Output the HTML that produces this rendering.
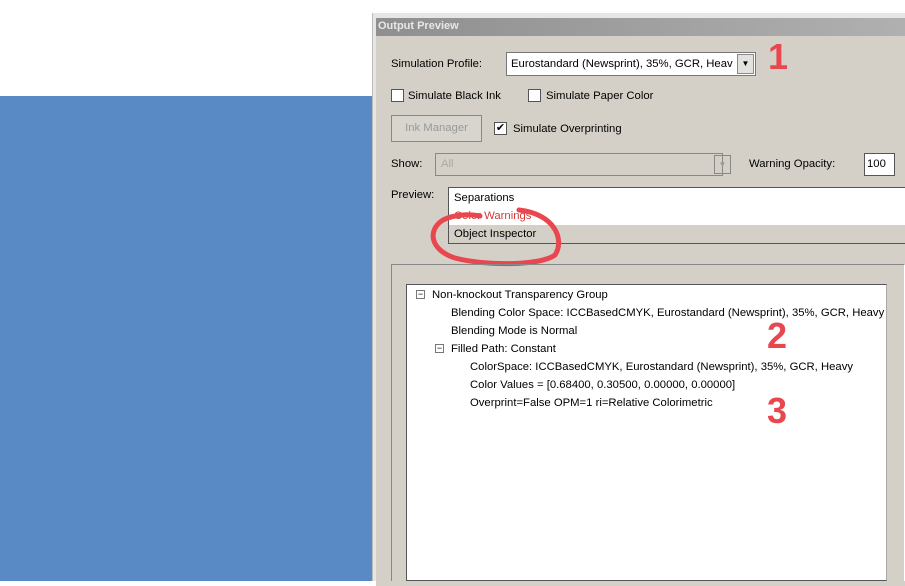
<!DOCTYPE html>
<html><head><style>
*{margin:0;padding:0;box-sizing:border-box}
body{width:905px;height:581px;position:relative;overflow:hidden;background:#fff;font-family:"Liberation Sans",sans-serif;font-size:11.3px;color:#000}
.a{position:absolute;white-space:nowrap}
.cb{position:absolute;width:13px;height:13px;background:#fff;border:1px solid #555}
.red{color:#e8474f;font-weight:bold;font-size:36px;font-family:"Liberation Sans",sans-serif}
</style></head><body>
<div class="a" style="left:0;top:96px;width:372px;height:485px;background:#5a8ac6"></div>
<div class="a" style="left:372px;top:13px;width:533px;height:568px;background:#e8e6e2;border-left:1px solid #bbb"></div>
<div class="a" style="left:376px;top:18px;width:529px;height:568px;background:#d4d0c8"></div>
<div class="a" style="left:376px;top:18px;width:529px;height:18px;background:linear-gradient(90deg,#8f8f8f,#b0b0b0);color:#e8e8e8;font-weight:bold;font-size:11px;padding:2px 0 0 2px">Output Preview</div>

<div class="a" style="left:391px;top:58px">Simulation Profile:</div>
<div class="a" style="left:506px;top:52px;width:250px;height:24px;background:#fff;border:1px solid #777;padding:5px 0 0 4px;overflow:hidden">Eurostandard (Newsprint), 35%, GCR, Heav</div>
<div class="a" style="left:737px;top:54px;width:17px;height:20px;background:#e4e2dc;border:1px solid #888;font-size:8px;text-align:center;line-height:18px">▼</div>
<div class="a red" style="left:768px;top:36px">1</div>

<div class="cb" style="left:391px;top:89px"></div><div class="a" style="left:408px;top:90px">Simulate Black Ink</div>
<div class="cb" style="left:528px;top:89px"></div><div class="a" style="left:546px;top:90px">Simulate Paper Color</div>

<div class="a" style="left:391px;top:115px;width:91px;height:27px;border:1px solid #888;background:#d8d5ce;color:#999;text-align:center;line-height:25px">Ink Manager</div>
<div class="cb" style="left:494px;top:122px;font-size:11px;line-height:11px;text-align:center">✔</div><div class="a" style="left:513px;top:123px">Simulate Overprinting</div>

<div class="a" style="left:391px;top:158px">Show:</div>
<div class="a" style="left:435px;top:153px;width:288px;height:23px;border:1px solid #888;background:#d4d0c8;color:#aaa;padding:4px 0 0 5px">All</div>
<div class="a" style="left:714px;top:155px;width:17px;height:19px;border:1px solid #888;color:#999;font-size:8px;text-align:center;line-height:17px">▼</div>
<div class="a" style="left:749px;top:158px">Warning Opacity:</div>
<div class="a" style="left:864px;top:153px;width:31px;height:23px;border:1px solid #555;background:#fff;padding:4px 0 0 2px">100</div>

<div class="a" style="left:391px;top:189px">Preview:</div>
<div class="a" style="left:448px;top:187px;width:457px;height:57px;border:1px solid #555;border-right:none;background:#fff"></div>
<div class="a" style="left:449px;top:225px;width:456px;height:18px;background:#d4d0c8"></div>
<div class="a" style="left:454px;top:192px">Separations</div>
<div class="a" style="left:454px;top:210px;color:#d23a3a">Color Warnings</div>
<div class="a" style="left:454px;top:228px">Object Inspector</div>
<svg class="a" style="left:425px;top:200px" width="150" height="70"><path d="M94 10 C130 14 140 40 130 55 C115 66 60 66 30 58 C5 50 2 30 18 20 C30 14 45 14 55 16" fill="none" stroke="#e8474f" stroke-width="5" stroke-linecap="round"/></svg>

<div class="a" style="left:391px;top:264px;width:514px;height:317px;border-top:1px solid #888;border-left:1px solid #888;border-right:1px solid #fff"></div>
<div class="a" style="left:406px;top:284px;width:481px;height:297px;border:1px solid #555;border-right:1px solid #aaa;background:#fff"></div>
<div class="a" style="left:416px;top:290px;width:9px;height:9px;border:1px solid #777;font-size:9px;line-height:6px;text-align:center">−</div>
<div class="a" style="left:432px;top:289px">Non-knockout Transparency Group</div>
<div class="a" style="left:451px;top:307px">Blending Color Space: ICCBasedCMYK, Eurostandard (Newsprint), 35%, GCR, Heavy</div>
<div class="a" style="left:451px;top:325px">Blending Mode is Normal</div>
<div class="a" style="left:435px;top:344px;width:9px;height:9px;border:1px solid #777;font-size:9px;line-height:6px;text-align:center">−</div>
<div class="a" style="left:451px;top:343px">Filled Path: Constant</div>
<div class="a" style="left:470px;top:361px">ColorSpace: ICCBasedCMYK, Eurostandard (Newsprint), 35%, GCR, Heavy</div>
<div class="a" style="left:470px;top:379px">Color Values = [0.68400, 0.30500, 0.00000, 0.00000]</div>
<div class="a" style="left:470px;top:397px">Overprint=False OPM=1 ri=Relative Colorimetric</div>
<div class="a red" style="left:767px;top:315px">2</div>
<div class="a red" style="left:767px;top:390px">3</div>
</body></html>
